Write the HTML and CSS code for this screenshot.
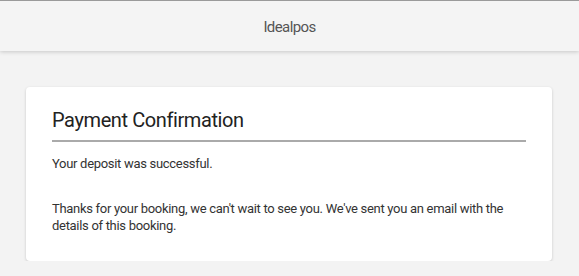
FILE: index.html
```html
<!DOCTYPE html>
<html>
<head>
<meta charset="utf-8">
<link rel="stylesheet" href="styles.css">
</head>
<body>
<header class="topbar">
  <span class="brand">Idealpos</span>
</header>
<main class="content">
  <section class="card">
    <h1 class="card-title">Payment Confirmation</h1>
    <p class="lead">Your deposit was successful.</p>
    <p class="note">Thanks for your booking, we can't wait to see you. We've sent you an email with the details of this booking.</p>
  </section>
</main>
</body>
</html>
```

FILE: styles.css
```css
html, body {
  margin: 0;
  padding: 0;
}
body {
  background: #f3f3f3;
  font-family: Roboto, "Liberation Sans", sans-serif;
  color: #333;
  border-top: 1px solid #9a9a9a;
}
.topbar {
  height: 50px;
  background: #f4f4f4;
  display: flex;
  align-items: center;
  justify-content: center;
  box-shadow: 0 1px 4px rgba(0,0,0,0.18);
}
.brand {
  font-size: 15px;
  letter-spacing: -0.6px;
  color: #555;
  padding-top: 2px;
}
.content {
  padding: 36px 27px 0 26px;
}
.card {
  background: #fff;
  border-radius: 4px;
  box-shadow: 0 1px 3px rgba(0,0,0,0.18);
  padding: 21px 26px 14px 26px;
}
.card-title {
  margin: 0;
  font-size: 20px;
  line-height: 24px;
  letter-spacing: -0.4px;
  font-weight: 400;
  color: #222;
  padding-bottom: 8px;
  border-bottom: 2px solid #aaa;
}
.lead {
  margin: 13px 0 0;
  font-size: 13px;
  letter-spacing: -0.3px;
  line-height: 17px;
}
.note {
  margin: 28px 0 0;
  font-size: 13px;
  letter-spacing: -0.3px;
  line-height: 17px;
  padding-bottom: 13px;
}
```
